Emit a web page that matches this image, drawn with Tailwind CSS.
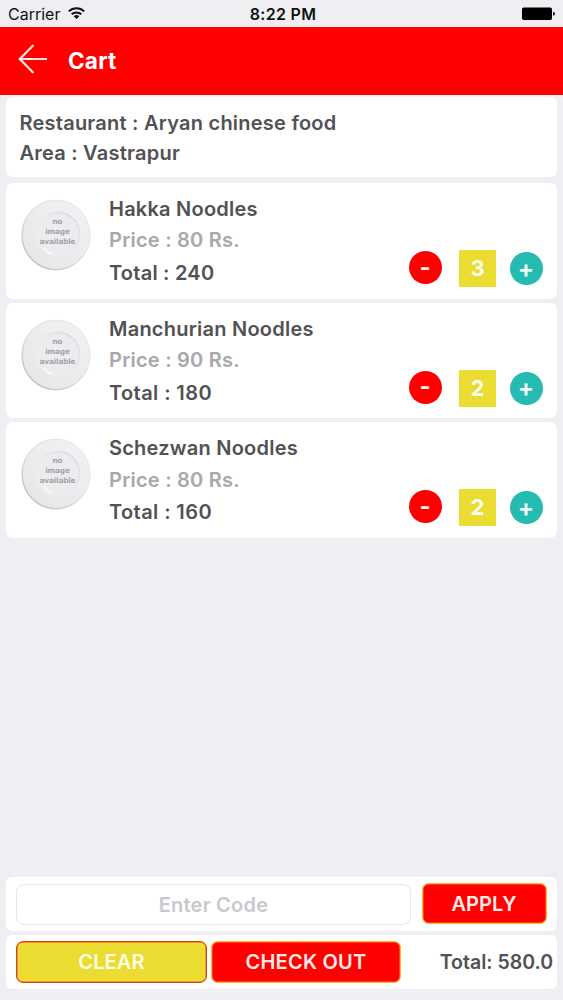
<!DOCTYPE html>
<html lang="en">
<head>
<meta charset="utf-8">
<title>Cart</title>
<script src="https://cdn.jsdelivr.net/npm/@tailwindcss/browser@4"></script>
</head>
<body class="w-[563px] h-[1000px] overflow-hidden bg-[#efeef3] font-['Inter',sans-serif] font-semibold text-[20px] tracking-[0.23px] text-[#525153] [font-feature-settings:'calt'_0]">
<svg class="absolute size-0">
  <defs>
    <linearGradient id="rim" x1="0.9" y1="0" x2="0.1" y2="1"><stop offset="0" stop-color="#f2f1f3"/><stop offset="0.6" stop-color="#ebeaed"/><stop offset="1" stop-color="#e6e5e8"/></linearGradient>
    <linearGradient id="edge" x1="1" y1="0" x2="0" y2="1"><stop offset="0" stop-color="#efeef0"/><stop offset="0.55" stop-color="#e0dfe2"/><stop offset="1" stop-color="#b5b3b8"/></linearGradient>
    <linearGradient id="well" x1="1" y1="0" x2="0" y2="1"><stop offset="0" stop-color="#dbdade"/><stop offset="0.5" stop-color="#e9e8eb"/><stop offset="1" stop-color="#f2f1f3"/></linearGradient>
    <symbol id="plate" viewBox="0 0 72 74">
      <ellipse cx="35" cy="37" rx="33.9" ry="34.8" fill="url(#rim)" stroke="url(#edge)" stroke-width="1.4"/>
      <circle cx="37" cy="36" r="21.5" fill="#ecebee" stroke="url(#well)" stroke-width="1.8"/>
      <path d="M23.5 50q2.5 4 6.5 5.5" fill="none" stroke="#fafafa" stroke-width="1.8" stroke-linecap="round"/>
      <g fill="#a5a4a8" font-family="DejaVu Sans, sans-serif" font-weight="700" font-size="7.4" letter-spacing="-0.2" text-anchor="middle">
        <text x="36.5" y="26">no</text><text x="36.5" y="35.5">image</text><text x="36.5" y="45.5">available</text>
      </g>
    </symbol>
  </defs>
</svg>
<div class="flex h-full flex-col">
  <header class="shrink-0">
    <div class="grid h-[27px] grid-cols-[1fr_auto_1fr] items-center px-2 pt-px text-[16px] leading-none text-[#111]">
      <div class="flex items-center gap-2"><span class="font-normal tracking-[0px]">Carrier</span>
        <svg width="17" height="12" viewBox="0 0 17 12" class="-mt-[2px]"><g fill="none" stroke="#111" stroke-width="2"><path d="M.8 4.4a11 11 0 0 1 15.4 0"/><path d="M3.7 7.3a7 7 0 0 1 9.6 0"/></g><path d="M5.7 9.2a4.2 4.2 0 0 1 5.6 0L8.5 12z" fill="#111"/></svg>
      </div>
      <span class="ml-[3px] tracking-[0.3px]">8:22 PM</span>
      <svg class="-mt-px justify-self-end" width="34" height="14" viewBox="0 0 34 14"><rect x="1" y=".5" width="30" height="12.6" rx="1.8" fill="#000"/><path d="M32 4.8q2 .4 2 2t-2 2z" fill="#000"/></svg>
    </div>
    <div class="flex h-[68px] items-center bg-[#ff0000] pl-[18px] text-white">
      <svg class="-mt-[4px]" width="30" height="30" viewBox="0 0 30 30" fill="none" stroke="#ffe9e6" stroke-width="2.2"><path d="M15.5 1 1.8 15l13.7 14M1.8 15H29"/></svg>
      <h1 class="-mt-px ml-5 text-[22.5px] font-bold">Cart</h1>
    </div>
  </header>
  <main class="flex flex-col px-[6px] pt-[2px]">
    <section class="mb-[6px] h-20 rounded-[7px] bg-white px-[13.5px] pt-[11px] leading-[30px]">
      <p>Restaurant : Aryan chinese food</p><p>Area : Vastrapur</p>
    </section>
    <div class="flex flex-col gap-1">
      <article class="flex h-[115.5px] rounded-[7px] bg-white pl-[15px] pr-[14.5px]">
        <svg class="mt-[15px] h-[74px] w-[72px] shrink-0"><use href="#plate"/></svg>
        <div class="ml-[16px] flex-1 pt-[10px] leading-8"><h2>Hakka Noodles</h2><p class="-mt-px mb-px text-[#a9a8ab]">Price : 80 Rs.</p><p>Total : 240</p></div>
        <div class="flex items-start pt-[67px] text-[24px] font-bold tracking-normal text-white/95">
          <button class="mt-[1px] grid size-[33px] place-items-center rounded-full bg-[#ff0000] leading-none">-</button>
          <span class="ml-[17.5px] grid size-[37px] place-items-center bg-[#ebdc32] text-[22px]">3</span>
          <button class="ml-[13.5px] mt-[2px] grid size-[33px] place-items-center rounded-full bg-[#25bbb0] leading-none">+</button>
        </div>
      </article>
      <article class="flex h-[115.5px] rounded-[7px] bg-white pl-[15px] pr-[14.5px]">
        <svg class="mt-[15px] h-[74px] w-[72px] shrink-0"><use href="#plate"/></svg>
        <div class="ml-[16px] flex-1 pt-[10px] leading-8"><h2>Manchurian Noodles</h2><p class="-mt-px mb-px text-[#a9a8ab]">Price : 90 Rs.</p><p class="tracking-[0.4px]">Total : 180</p></div>
        <div class="flex items-start pt-[67px] text-[24px] font-bold tracking-normal text-white/95">
          <button class="mt-[1px] grid size-[33px] place-items-center rounded-full bg-[#ff0000] leading-none">-</button>
          <span class="ml-[17.5px] grid size-[37px] place-items-center bg-[#ebdc32] text-[22px]">2</span>
          <button class="ml-[13.5px] mt-[2px] grid size-[33px] place-items-center rounded-full bg-[#25bbb0] leading-none">+</button>
        </div>
      </article>
      <article class="flex h-[115.5px] rounded-[7px] bg-white pl-[15px] pr-[14.5px]">
        <svg class="mt-[15px] h-[74px] w-[72px] shrink-0"><use href="#plate"/></svg>
        <div class="ml-[16px] flex-1 pt-[10px] leading-8"><h2>Schezwan Noodles</h2><p class="text-[#a9a8ab]">Price : 80 Rs.</p><p class="tracking-[0.4px]">Total : 160</p></div>
        <div class="flex items-start pt-[67px] text-[24px] font-bold tracking-normal text-white/95">
          <button class="mt-[1px] grid size-[33px] place-items-center rounded-full bg-[#ff0000] leading-none">-</button>
          <span class="ml-[17.5px] grid size-[37px] place-items-center bg-[#ebdc32] text-[22px]">2</span>
          <button class="ml-[13.5px] mt-[2px] grid size-[33px] place-items-center rounded-full bg-[#25bbb0] leading-none">+</button>
        </div>
      </article>
    </div>
  </main>
  <footer class="mt-auto flex flex-col gap-1 px-[6px] pb-[11px]">
    <div class="flex h-[54px] rounded-[6px] bg-white pl-[10px] pt-[6px]">
      <div class="mt-[1px] grid h-[41px] w-[395px] place-items-center rounded-[8px] border border-[#e6e5e8] text-[#cac8cd]">Enter Code</div>
      <button class="ml-[10.5px] grid h-[41px] w-[125px] place-items-center rounded-[7px] border border-[#fbb52c] bg-[#ff0000] tracking-[0.1px] text-[#ffebe8] shadow-[inset_0_0_0_0.5px_#fb8a1c]">APPLY</button>
    </div>
    <div class="flex h-[54px] rounded-[6px] bg-white pl-[10px] pr-[4px] pt-[6px]">
      <button class="grid h-[42px] w-[191px] place-items-center rounded-[7px] border border-[#dd3c20] bg-[#ebdc32] tracking-[0.1px] text-[#fffde8] shadow-[inset_0_0_0_0.5px_#e5501f]">CLEAR</button>
      <button class="ml-1 grid h-[42px] w-[190px] place-items-center rounded-[7px] border border-[#fbb52c] bg-[#ff0000] text-[#ffebe8] shadow-[inset_0_0_0_0.5px_#fb8a1c]">CHECK OUT</button>
      <p class="ml-auto text-[19.5px] leading-[43px] tracking-[0px]">Total: 580.0</p>
    </div>
  </footer>
</div>
</body>
</html>
